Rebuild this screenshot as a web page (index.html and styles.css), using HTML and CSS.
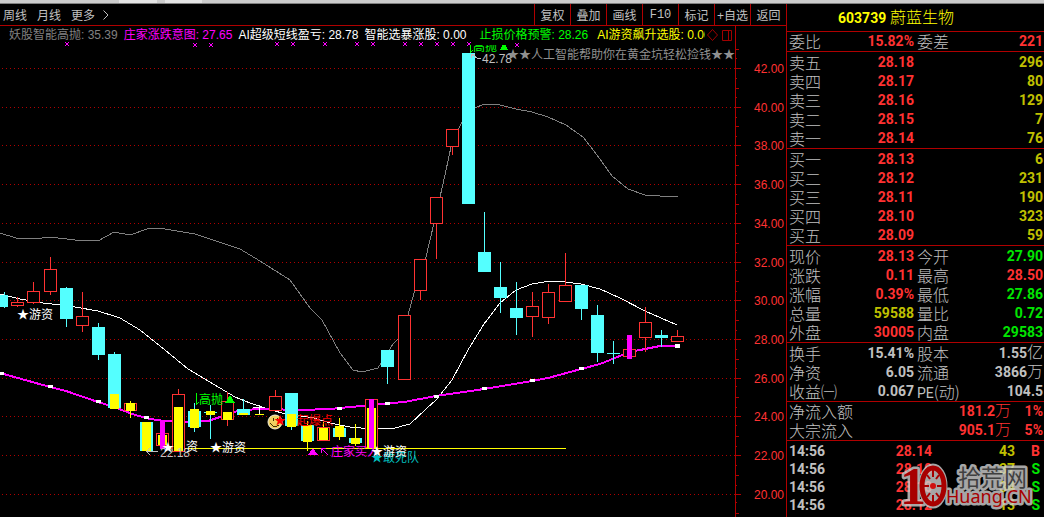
FILE: index.html
```
<!DOCTYPE html>
<html lang="zh-CN">
<head>
  <meta charset="utf-8">
  <title>603739 蔚蓝生物</title>
  <link rel="stylesheet" href="styles.css">
</head>
<body>
  <div class="window-edge"></div>
  <div class="app">
    <main class="main">
      <nav class="toolbar">
        <div class="periods">
          <button>周线</button>
          <button>月线</button>
          <button>更多
            <svg class="chevron" width="6" height="10" viewBox="0 0 6 10"><path d="M0.5 0.5L5 5L0.5 9.5"/></svg>
          </button>
        </div>
        <div class="tools">
          <button>复权</button>
          <button>叠加</button>
          <button>画线</button>
          <button class="mono">F10</button>
          <button>标记</button>
          <button>+自选</button>
          <button>返回</button>
        </div>
      </nav>

      <div class="indicators">
        <div class="indicator-list">
          <span class="gray">妖股智能高抛: 35.39</span>
          <span class="magenta">庄家涨跌意图: 27.65</span>
          <span class="white">AI超级短线盈亏: 28.78</span>
          <span class="white">智能选暴涨股: 0.00</span>
          <span class="green alert">止损价格预警: 28.26</span>
          <span class="yellow last">AI游资飙升选股: 0.00</span>
          <svg class="pane-icons" width="26" height="12" viewBox="0 0 26 12">
            <path d="M5.5 0.5L10.5 6L5.5 11.5L0.5 6Z"/>
            <path d="M15.5 1.5H24.5V11.5H15.5ZM21.5 1.5V11.5"/>
          </svg>
        </div>
      </div>

      <svg class="chart" viewBox="0 42 786 475" preserveAspectRatio="xMinYMin meet">
        <defs>
          <clipPath id="below-header"><rect x="0" y="45" width="786" height="472"/></clipPath>
        </defs>

        <path class="grid" d="M2 68.5H735M2 107.5H735M2 145.5H735M2 184.5H735M2 223.5H735M2 262.5H735M2 300.5H735M2 339.5H735M2 378.5H735M2 416.5H735M2 455.5H735M2 494.5H735"/>

        <!-- price axis -->
        <path class="axis" d="M735.5 42V517
          M735 68.5h6M735 107.5h6M735 145.5h6M735 184.5h6M735 223.5h6M735 262.5h6M735 300.5h6M735 339.5h6M735 378.5h6M735 416.5h6M735 455.5h6M735 494.5h6
          M735 49.5h4M735 88.5h4M735 126.5h4M735 165.5h4M735 204.5h4M735 243.5h4M735 281.5h4M735 320.5h4M735 359.5h4M735 397.5h4M735 436.5h4M735 475.5h4M735 513.5h4
          M735 58.5h2M735 78.5h2M735 97.5h2M735 117.5h2M735 136.5h2M735 155.5h2M735 175.5h2M735 194.5h2M735 213.5h2M735 233.5h2M735 252.5h2M735 270.5h2M735 291.5h2M735 310.5h2M735 330.5h2M735 349.5h2M735 368.5h2M735 386.5h2M735 407.5h2M735 425.5h2M735 446.5h2M735 465.5h2M735 485.5h2M735 502.5h2"/>
        <g class="axis-label">
          <text x="784" y="73">42.00</text>
          <text x="784" y="112">40.00</text>
          <text x="784" y="150">38.00</text>
          <text x="784" y="189">36.00</text>
          <text x="784" y="228">34.00</text>
          <text x="784" y="267">32.00</text>
          <text x="784" y="305">30.00</text>
          <text x="784" y="344">28.00</text>
          <text x="784" y="383">26.00</text>
          <text x="784" y="421">24.00</text>
          <text x="784" y="460">22.00</text>
          <text x="784" y="499">20.00</text>
        </g>

        <!-- moving lines -->
        <polyline class="line-gray" points="0,233 16,238 35,239 50,237 75,240 98,241 114,232 130,235 150,228 165,229 195,234 240,249 260,261 290,280 310,308 322,320 340,353 353,370 362,372 378,368 393,344 398,339 408,315 414,293 426,257 434,223 443,184 451,147 459,128 462,122 475,108 484,104 500,105 516,109 532,112 548,117 566,125 583,137 597,155 612,176 628,189 645,195 660,196 678,196"/>
        <polyline class="line-white" points="0,294 20,299 43,303 60,305 75,307 98,311 120,318 140,330 165,350 188,369 220,388 235,397 250,403 268,409 282,413 314,418 330,423 350,427 372,429 395,428 410,424 426,409 436,400 452,380 468,350 484,324 500,303 516,290 532,284 550,281 565,282 581,284 600,289 620,298 645,311 677,325"/>
        <polyline class="line-magenta" points="0,373 50,387 66,391 98,402 114,407 135,415 150,419 165,421 190,422 208,421 220,417 240,410 265,409 300,410 330,409 371,405 404,402 436,396 484,389 532,381 548,378 581,369 600,364 615,358 629,352 640,350 660,346 677,346"/>
        <path class="knots" d="M0 372h4v3h-4zM48 385h5v3h-5zM96 400h5v3h-5zM144 416h5v3h-5zM337 407h5v3h-5zM385 402h5v3h-5zM434 395h5v3h-5zM482 387h5v3h-5zM530 379h5v3h-5zM579 367h5v3h-5zM675 344h5v4h-5z"/>
        <path class="line-yellow" d="M180 448.5H566"/>

        <!-- falling candles -->
        <path class="down-wick" d="M4.5 292V308M66.5 287V327M98.5 323V360M114.5 352V408M194.5 403V432M210.5 405V439M243.5 399V414M291.5 393V430M387.5 350V384M484.5 212V272M500.5 262V313M516.5 282V335M581.5 285V320M597.5 305V362M613.5 341V364M661.5 330V347M204 412.5H217M607 353.5H620"/>
        <path class="down-body" d="M0 295h8v12h-8zM60 288h13v31h-13zM92 327h13v28h-13zM108 354h13v54h-13zM140 422h13v29h-13zM188 411h13v16h-13zM237 409h13v6h-13zM285 393h13v33h-13zM301 425h13v16h-13zM333 428h13v9h-13zM349 438h13v5h-13zM381 350h13v17h-13zM462 53h13v151h-13zM478 252h13v20h-13zM494 287h13v11h-13zM510 308h13v10h-13zM575 285h13v24h-13zM591 315h13v38h-13zM655 335h13v3h-13z"/>

        <!-- rising candles -->
        <path class="up-wick" d="M17.5 297V307M33.5 282V304M50.5 257V295M82.5 292V332M178.5 389V394M227.5 392V426M275.5 390V396M323.5 422V427M420.5 290V300M436.5 223V259M452.5 147V155M532.5 292V337M548.5 284V324M565.5 253V285M645.5 307V352M677.5 330V336"/>
        <path class="up-body" d="M11.5 302.5h12v3h-12zM27.5 291.5h12v11h-12zM44.5 269.5h12v22h-12zM76.5 316.5h12v9h-12zM124.5 403.5h12v7h-12zM156.5 433.5h12v12h-12zM172.5 394.5h12v57h-12zM221.5 401.5h12v18h-12zM269.5 396.5h12v14h-12zM317.5 427.5h12v13h-12zM365.5 399.5h12v48h-12zM398.5 315.5h12v64h-12zM414.5 259.5h12v31h-12zM430.5 197.5h12v26h-12zM446.5 129.5h12v17h-12zM526.5 306.5h12v10h-12zM542.5 292.5h12v25h-12zM559.5 285.5h12v16h-12zM623.5 349.5h12v7h-12zM639.5 322.5h12v15h-12zM671.5 336.5h12v5h-12z"/>

        <path class="yellow-wick" d="M130.5 401V418M307.5 421V451M323.5 427V422M339.5 418V440M355.5 424V446M255 414.5H264"/>
        <path class="yellow-body" d="M110 394h9v15h-9zM126 403h9v8h-9zM142 422h9v29h-9zM158 435h9v10h-9zM174 407h9v44h-9zM190 409h9v19h-9zM206 411h9v4h-9zM223 412h9v8h-9zM239 413h9v2h-9zM287 414h9v13h-9zM303 425h9v17h-9zM319 428h9v12h-9zM335 426h9v11h-9zM351 438h9v6h-9zM367 408h9v40h-9z"/>
        <path class="doji" d="M253 407.5H265M259.5 405V414"/>
        <path class="magenta-body" d="M160 420h5v29h-5zM369 399h5v49h-5zM627 335h5v24h-5z"/>

        <!-- signal crosses under the header -->
        <path class="crosses" d="M65 42l4 4m0-4l-4 4M193 43l4 4m0-4l-4 4M209 43l4 4m0-4l-4 4M275 42l4 4m0-4l-4 4M291 42l4 4m0-4l-4 4M323 42l4 4m0-4l-4 4M355 42l4 4m0-4l-4 4M371 42l4 4m0-4l-4 4M403 42l4 4m0-4l-4 4M419 42l4 4m0-4l-4 4M435 42l4 4m0-4l-4 4M451 42l4 4m0-4l-4 4M467 42l4 4m0-4l-4 4M515 43l4 4m0-4l-4 4"/>

        <g class="note-green">
          <path class="hook" d="M196.5 393V404.5L199 402"/>
          <text x="199" y="404">高抛</text>
          <path d="M230 395L235 403H225Z"/>
          <g clip-path="url(#below-header)">
            <path class="hook" d="M470.5 44V52.5L473 50"/>
            <text x="473" y="51">高抛</text>
            <path d="M504 42L508 50H500Z"/>
          </g>
        </g>

        <g class="note-gray">
          <path class="pointer" d="M481 58H477L471 54M471 58V54H475"/>
          <text x="482" y="63">42.78</text>
          <path class="pointer" d="M158 451.5H147M150 448L147 451.5L150 455"/>
          <text x="160" y="457">22.18</text>
        </g>
        <text class="slogan" x="507" y="59">★★人工智能帮助你在黄金坑轻松捡钱★★</text>

        <g class="note-white">
          <text x="17" y="319">★游资</text>
          <text x="162" y="452">★</text>
          <text x="186" y="451">资</text>
          <text x="210" y="452">★游资</text>
        </g>

        <g class="face">
          <circle class="face-skin" cx="275" cy="422" r="7"/>
          <path class="face-ink" d="M273 418v3M277 418v3M270 423Q274 429 279 425"/>
        </g>
        <g class="note-red">
          <text x="274" y="425">★</text>
          <text x="297" y="425">起爆点</text>
        </g>
        <g class="note-magenta">
          <path d="M313 448L318 455H308Z"/>
          <path class="hook" d="M328 455L321 448M321 453V448H326"/>
          <text x="331" y="456">庄家买入</text>
        </g>
        <text class="note-teal" x="371" y="462">★敢死队</text>
        <text class="note-white" x="371" y="456">★游资</text>
      </svg>
    </main>

    <aside class="quote">
      <h1 class="stock"><b>603739</b> 蔚蓝生物</h1>

      <table class="quad tight">
        <tr><th>委比</th><td class="red">15.82%</td><th>委差</th><td class="red">221</td></tr>
      </table>

      <table class="quad">
        <tr><th>卖五</th><td class="red">28.18</td><th></th><td class="olive">296</td></tr>
        <tr><th>卖四</th><td class="red">28.17</td><th></th><td class="olive">80</td></tr>
        <tr><th>卖三</th><td class="red">28.16</td><th></th><td class="olive">129</td></tr>
        <tr><th>卖二</th><td class="red">28.15</td><th></th><td class="olive">7</td></tr>
        <tr><th>卖一</th><td class="red">28.14</td><th></th><td class="olive">76</td></tr>
      </table>

      <table class="quad">
        <tr><th>买一</th><td class="red">28.13</td><th></th><td class="olive">6</td></tr>
        <tr><th>买二</th><td class="red">28.12</td><th></th><td class="olive">231</td></tr>
        <tr><th>买三</th><td class="red">28.11</td><th></th><td class="olive">190</td></tr>
        <tr><th>买四</th><td class="red">28.10</td><th></th><td class="olive">323</td></tr>
        <tr><th>买五</th><td class="red">28.09</td><th></th><td class="olive">59</td></tr>
      </table>

      <table class="quad">
        <tr><th>现价</th><td class="red">28.13</td><th>今开</th><td class="lime">27.90</td></tr>
        <tr><th>涨跌</th><td class="red">0.11</td><th>最高</th><td class="red">28.50</td></tr>
        <tr><th>涨幅</th><td class="red">0.39%</td><th>最低</th><td class="lime">27.86</td></tr>
        <tr><th>总量</th><td class="olive">59588</td><th>量比</th><td class="lime">0.72</td></tr>
        <tr><th>外盘</th><td class="red">30005</td><th>内盘</th><td class="lime">29583</td></tr>
      </table>

      <table class="quad">
        <tr><th>换手</th><td>15.41%</td><th>股本</th><td>1.55<span class="unit">亿</span></td></tr>
        <tr><th>净资</th><td>6.05</td><th>流通</th><td>3866<span class="unit">万</span></td></tr>
        <tr><th>收益㈠</th><td>0.067</td><th><b>PE</b>(动)</th><td>104.5</td></tr>
      </table>

      <table class="flow tight">
        <tr><th>净流入额</th><td class="red">181.2<span class="unit">万</span></td><td class="red">1%</td></tr>
        <tr><th>大宗流入</th><td class="red">905.1<span class="unit">万</span></td><td class="red">5%</td></tr>
      </table>

      <table class="ticks">
        <tr><td>14:56</td><td class="red">28.14</td><td class="olive">43</td><td class="red">B</td></tr>
        <tr><td>14:56</td><td class="red">28.10</td><td class="olive">37</td><td class="lime">S</td></tr>
        <tr><td>14:56</td><td class="red">28.10</td><td class="olive">34</td><td class="lime">S</td></tr>
        <tr><td>14:56</td><td class="red">28.12</td><td class="olive">13</td><td class="lime">S</td></tr>
      </table>

      <svg class="watermark" width="134" height="50" viewBox="0 0 134 50">
        <g class="halo">
          <text class="wm-one" x="0" y="43">1</text>
          <ellipse cx="33" cy="25" rx="12" ry="20"/>
          <text class="wm-name" x="58" y="25">拾荒网</text>
          <text class="wm-site" x="46" y="42">Huang.CN</text>
        </g>
        <text class="wm-one" x="0" y="43">1</text>
        <ellipse class="wm-ring" cx="33" cy="25" rx="11" ry="18"/>
        <path class="wm-teeth" d="M33 8V16M33 34V42M24 25H29M37 25H42M27 14L30 18M39 14L36 18M27 36L30 32M39 36L36 32"/>
        <circle class="wm-hub" cx="33" cy="25" r="3"/>
        <text class="wm-name" x="58" y="25">拾荒网</text>
        <text class="wm-site" x="46" y="42">Huang.CN</text>
      </svg>
    </aside>
  </div>
</body>
</html>
```
FILE: styles.css
```
* {
  margin: 0;
  padding: 0;
  box-sizing: border-box;
}

body {
  display: flex;
  flex-direction: column;
  min-height: 100vh;
  background: #000;
  color: #c0c0c0;
  font-family: "Liberation Sans", "Noto Sans CJK SC", sans-serif;
  font-size: 12px;
}

button {
  background: none;
  border: none;
  color: inherit;
  font: inherit;
  cursor: pointer;
}

.window-edge {
  height: 4px;
  border-bottom: 1px solid #808080;
  background: linear-gradient(90deg, #ccc 119px, #e4e4e4 119px 157px, #ccc 157px 165px, #e4e4e4 165px 202px, #ccc 202px);
}

.app {
  flex: 1;
  display: flex;
}

.main {
  flex: 1;
  min-width: 0;
  display: flex;
  flex-direction: column;
}

/* Toolbar */
.toolbar {
  display: flex;
  justify-content: space-between;
  height: 22px;
  border-bottom: 1px solid #b00000;
}

.periods {
  display: flex;
  gap: 10px;
  padding-left: 3px;
}

.periods button {
  display: flex;
  align-items: center;
  gap: 8px;
}

.chevron {
  fill: none;
  stroke: #c0c0c0;
}

.tools {
  display: flex;
}

.tools button {
  width: 36px;
  border-left: 1px solid #b00000;
  white-space: nowrap;
}

.tools .mono {
  font-family: "Liberation Mono", monospace;
}

/* Indicator header */
.indicators {
  height: 16px;
  padding-right: 50px;
}

.indicator-list {
  display: flex;
  align-items: center;
  gap: 6px;
  height: 16px;
  padding: 2px 2px 0 9px;
  border-right: 1px solid #b00000;
  line-height: 16px;
  white-space: nowrap;
}

.indicator-list .alert {
  margin: 0 3px 0 7px;
}

.indicator-list .last {
  flex: 1;
  min-width: 0;
  margin-right: -4px;
  overflow: hidden;
}

.pane-icons {
  flex: none;
  fill: none;
  stroke: #a00000;
}

.gray { color: #808080; }
.magenta { color: #f0f; }
.white { color: #fff; }
.green { color: #0f0; }
.yellow { color: #ff0; }
.red { color: #ff3232; }
.olive { color: #c0c000; }
.lime { color: #00e600; }

/* Chart */
.chart {
  display: block;
  width: 100%;
}

.chart path,
.chart polyline {
  shape-rendering: crispEdges;
}

.grid {
  stroke: #b00000;
  stroke-dasharray: 1 3;
}

.axis {
  fill: none;
  stroke: #b00000;
}

.axis-label {
  fill: #ff3232;
  text-anchor: end;
  font-size: 12px;
}

.line-gray,
.line-white,
.line-magenta {
  fill: none;
  stroke-width: 1;
}

.line-gray { stroke: #808080; }
.line-white { stroke: #fff; }
.line-magenta { stroke: #f0f; stroke-width: 2; }
.line-yellow { stroke: #ff0; }
.knots { fill: #fff; }

.down-wick { stroke: #54ffff; }
.down-body { fill: #54ffff; }
.up-wick { stroke: #ff3232; }
.up-body { fill: #000; stroke: #ff3232; }
.yellow-wick { stroke: #ff0; }
.yellow-body { fill: #ff0; }
.magenta-body { fill: #f0f; }
.doji { stroke: #fff; }

.chart .crosses {
  fill: none;
  stroke: #f0f;
  shape-rendering: auto;
}

.note-green,
.note-white,
.note-red,
.note-magenta,
.note-teal,
.slogan {
  font-family: "Noto Sans CJK SC", sans-serif;
}

.note-green { fill: #0f0; stroke: none; }
.note-green .hook { fill: none; stroke: #0f0; }
.note-gray { fill: #c0c0c0; }
.note-gray .pointer { fill: none; stroke: #c0c0c0; }
.note-white { fill: #fff; }
.note-red { fill: #f00; }
.note-magenta { fill: #f0f; }
.note-magenta .hook { fill: none; stroke: #f0f; }
.note-teal { fill: #00c0c0; }
.slogan { fill: #909090; }

.face-skin { fill: #f0d060; stroke: #f4f0d8; }
.face-ink { fill: none; stroke: #403000; }

/* Quote panel */
.quote {
  position: relative;
  width: 258px;
  border-left: 1px solid #b00000;
}

.stock {
  height: 28px;
  padding-left: 51px;
  border-bottom: 1px solid #b00000;
  color: #ff0;
  font-family: Roboto, "Noto Sans CJK SC", sans-serif;
  font-size: 16px;
  font-weight: 300;
  line-height: 28px;
}

.stock b {
  font-size: 14px;
  font-weight: 700;
}

.quote table {
  width: 100%;
  table-layout: fixed;
  border-collapse: separate;
  border-spacing: 0;
  padding: 1px 1px 0 2px;
  border-bottom: 1px solid #b00000;
}

.quote table.tight {
  padding-top: 0;
}

.quote th,
.quote td {
  height: 19px;
  line-height: 19px;
  vertical-align: middle;
  white-space: nowrap;
}

.quote th {
  font-family: "Noto Sans CJK SC", sans-serif;
  font-size: 16px;
  font-weight: 300;
  text-align: left;
}

.quote td {
  font-family: Roboto, "Noto Sans CJK SC", sans-serif;
  font-size: 14px;
  font-weight: 700;
  text-align: right;
}

.quote th b {
  font-family: Roboto, sans-serif;
  font-size: 14px;
  line-height: 1px;
}

.quote .unit {
  font-size: 16px;
  font-weight: 300;
  line-height: 1px;
}

.quad th:nth-child(1) { width: 50px; }
.quad td:nth-child(2) { width: 75px; }
.quad th:nth-child(3) { width: 50px; padding-left: 3px; }

.flow th { width: 80px; }
.flow td:last-child { width: 32px; }

.quote .ticks {
  border-bottom: none;
}

.quote .ticks td {
  height: 18px;
  line-height: 18px;
}

.quote .ticks td:first-child { width: 50px; text-align: left; }
.ticks td:nth-child(2) { width: 93px; }
.ticks td:nth-child(4) { width: 28px; padding-right: 3px; }

/* Watermark */
.watermark {
  position: absolute;
  right: 10px;
  bottom: 6px;
}

.wm-one {
  fill: #a80000;
  font: 700 52px "Liberation Serif", serif;
}

.wm-name {
  fill: #404040;
  font: 400 23px "Noto Sans CJK SC", sans-serif;
}

.wm-site {
  fill: #a80000;
  font: 400 18px "Noto Sans", sans-serif;
}

.halo {
  opacity: 0.8;
}

.halo text,
.halo ellipse {
  fill: #d0d0d0;
  stroke: #d0d0d0;
  stroke-width: 5;
  stroke-linejoin: round;
}

.wm-ring { fill: none; stroke: #a80000; stroke-width: 5; }
.wm-teeth { fill: none; stroke: #a80000; stroke-width: 2; }
.wm-hub { fill: #d01010; }
```
